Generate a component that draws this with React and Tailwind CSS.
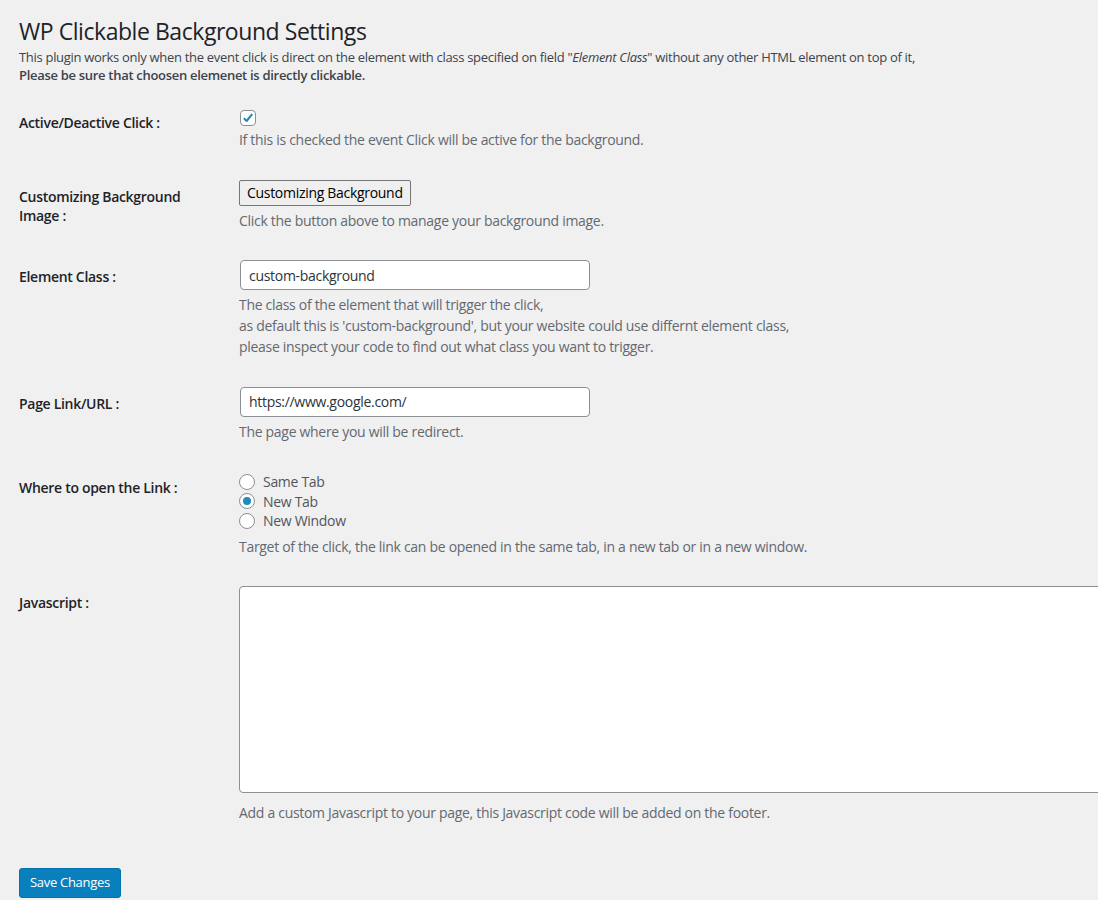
import { useState } from "react";

const font = { fontFamily: '"Open Sans", "Noto Sans", Arial, sans-serif' };

const Row = ({ label, labelPad = "pt-[7px]", children }) => (
  <div className="flex items-start">
    <div className={`w-[220px] shrink-0 text-[14px] leading-[19px] font-semibold text-[#1d2327] pr-[20px] ${labelPad}`}>
      {label}
    </div>
    <div className="flex-1 min-w-0">{children}</div>
  </div>
);

const Desc = ({ children, className = "mt-[4px]" }) => (
  <p className={`${className} text-[14px] leading-[21px] text-[#646970]`}>{children}</p>
);

const Radio = ({ checked, label, onClick }) => (
  <label className="flex items-center h-[19.5px] cursor-pointer" onClick={onClick}>
    <span className="w-[16px] h-[16px] rounded-full border border-[#8c8f94] bg-white flex items-center justify-center mr-[8px]">
      {checked && <span className="w-[8px] h-[8px] rounded-full bg-[#1e8cbe]" />}
    </span>
    <span className="text-[14px] text-[#50575e]">{label}</span>
  </label>
);

const App = () => {
  const [active, setActive] = useState(true);
  const [target, setTarget] = useState("new");
  const [cls, setCls] = useState("custom-background");
  const [url, setUrl] = useState("https://www.google.com/");
  const [js, setJs] = useState("");

  return (
    <div className="min-h-[900px] w-full overflow-hidden bg-[#f0f0f1] pl-[19px] tracking-[-0.3px]" style={font}>
      {/* ================= HEADER ================= */}
      <h1 className="pt-[16px] text-[23px] leading-[30px] font-normal text-[#1d2327] whitespace-nowrap tracking-[-0.45px]">
        WP Clickable Background Settings
      </h1>
      <div className="mt-[2px] text-[13px] leading-[18px] text-[#3c434a] whitespace-nowrap">
        <p>
          This plugin works only when the event click is direct on the element with class specified on field "
          <em>Element Class</em>" without any other HTML element on top of it,
        </p>
        <p className="font-semibold">Please be sure that choosen elemenet is directly clickable.</p>
      </div>

      {/* ================= FORM ================= */}
      <div className="mt-[25px]">
        <Row label="Active/Deactive Click :" labelPad="pt-[4px]">
          <button
            onClick={() => setActive(!active)}
            className="w-[16px] h-[16px] mt-[1px] ml-[1px] rounded-[4px] border border-[#8c8f94] bg-white flex items-center justify-center"
          >
            {active && (
              <svg viewBox="0 0 16 16" className="w-[14px] h-[14px]">
                <path d="M3.2 8.3 L6.4 11.4 L12.8 3.6" fill="none" stroke="#1e8cbe" strokeWidth="2.4" strokeLinejoin="round" />
              </svg>
            )}
          </button>
          <Desc className="mt-[3px]">If this is checked the event Click will be active for the background.</Desc>
        </Row>

        <div className="mt-[29.5px]">
          <Row label={<>Customizing Background<br />Image :</>}>
            <button className="h-[26px] px-[7px] border border-[#767676] rounded-[2px] bg-[#efefef] text-[14px] text-black">
              Customizing Background
            </button>
            <Desc>Click the button above to manage your background image.</Desc>
          </Row>
        </div>

        <div className="mt-[29.5px]">
          <Row label="Element Class :">
            <input
              value={cls}
              onChange={(e) => setCls(e.target.value)}
              className="w-[350px] h-[30px] ml-[1px] px-[8px] rounded-[4px] border border-[#8c8f94] bg-white text-[14px] text-[#2c3338] outline-none"
            />
            <Desc>
              The class of the element that will trigger the click,
              <br />
              as default this is 'custom-background', but your website could use differnt element class,
              <br />
              please inspect your code to find out what class you want to trigger.
            </Desc>
          </Row>
        </div>

        <div className="mt-[29.5px]">
          <Row label="Page Link/URL :">
            <input
              value={url}
              onChange={(e) => setUrl(e.target.value)}
              className="w-[350px] h-[30px] ml-[1px] px-[8px] rounded-[4px] border border-[#8c8f94] bg-white text-[14px] text-[#2c3338] outline-none"
            />
            <Desc>The page where you will be redirect.</Desc>
          </Row>
        </div>

        <div className="mt-[29.5px]">
          <Row label="Where to open the Link :">
            <div className="pt-[1px]">
              <Radio checked={target === "same"} label="Same Tab" onClick={() => setTarget("same")} />
              <Radio checked={target === "new"} label="New Tab" onClick={() => setTarget("new")} />
              <Radio checked={target === "window"} label="New Window" onClick={() => setTarget("window")} />
            </div>
            <Desc className="mt-[5px]">
              Target of the click, the link can be opened in the same tab, in a new tab or in a new window.
            </Desc>
          </Row>
        </div>

        <div className="mt-[29.5px]">
          <Row label="Javascript :">
            <textarea
              value={js}
              onChange={(e) => setJs(e.target.value)}
              className="block w-[900px] h-[207px] rounded-[4px] border border-[#8c8f94] bg-white outline-none resize-none"
            />
            <Desc className="mt-[8.5px]">
              Add a custom Javascript to your page, this Javascript code will be added on the footer.
            </Desc>
          </Row>
        </div>

        {/* ================= SAVE ================= */}
        <button className="mt-[45px] h-[30px] px-[10px] rounded-[3px] bg-[#0a7fbd] border border-[#0073aa] text-white text-[13px]">
          Save Changes
        </button>
      </div>
    </div>
  );
};

export default App;
